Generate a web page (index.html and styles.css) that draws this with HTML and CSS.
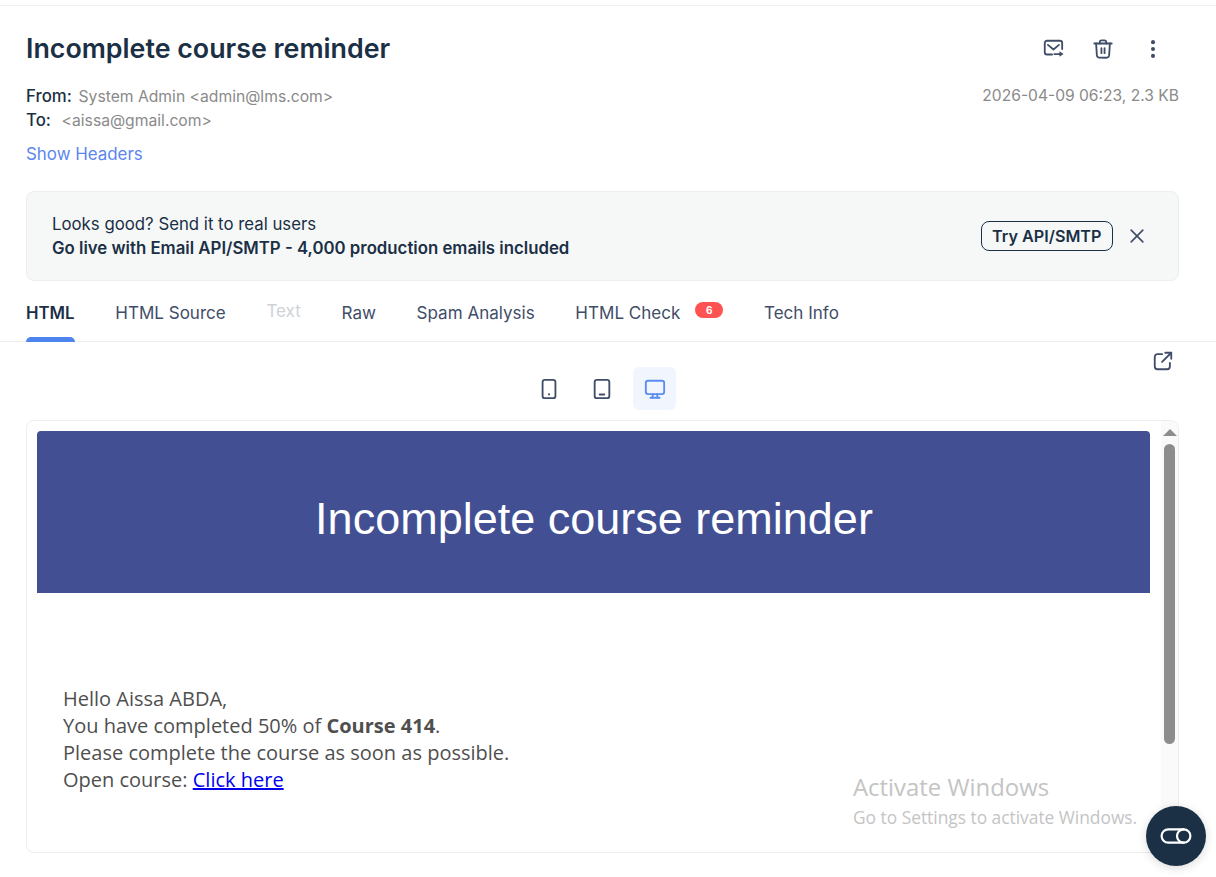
FILE: index.html
```html
<!DOCTYPE html>
<html lang="en">
<head>
    <meta charset="UTF-8">
    <meta name="viewport" content="width=device-width, initial-scale=1.0">
    <title>Incomplete course reminder</title>
    <link rel="stylesheet" href="styles.css">
</head>
<body>
    <div class="page">
        <div class="mail-head">
            <div class="title-row">
                <h1>Incomplete course reminder</h1>
                <div class="actions">
                    <svg class="icon" viewBox="0 0 24 24"><path d="M11 18H5.500A2.500 2.500 0 0 1 3 15.500v-10A2.500 2.500 0 0 1 5.500 3h14A2.500 2.500 0 0 1 22 5.500V12"/><path d="M6.500 7.500l6 5 6-5"/><path d="M13.500 17.500h6"/><path d="M19 14.500l4.500 3-4.500 3z" class="solid"/></svg>
                    <svg class="icon" viewBox="0 0 24 24"><path d="M2.500 6h19"/><path d="M8.500 6V4.500A2 2 0 0 1 10.500 2.500h3a2 2 0 0 1 2 2V6"/><path d="M4.500 6l.8 13a3 3 0 0 0 3 2.500h7.400a3 3 0 0 0 3-2.500l.8-13"/><path d="M10.300 11v5.500"/><path d="M13.700 11v5.500"/></svg>
                    <svg class="icon" viewBox="0 0 24 24"><circle cx="12" cy="4.500" r="2.200" class="solid"/><circle cx="12" cy="12" r="2.200" class="solid"/><circle cx="12" cy="19.500" r="2.200" class="solid"/></svg>
                </div>
            </div>
            <div class="meta-row">
                <div class="people">
                    <div class="person"><b>From:</b> <span class="addr from">System Admin &lt;admin@lms.com&gt;</span></div>
                    <div class="person"><b>To:</b> <span class="addr to">&lt;aissa@gmail.com&gt;</span></div>
                </div>
                <div class="stamp">2026-04-09 06:23, 2.3 KB</div>
            </div>
            <a class="show-headers" href="#">Show Headers</a>
            <div class="promo">
                <div class="promo-text">
                    <div>Looks good? Send it to real users</div>
                    <strong>Go live with Email API/SMTP - 4,000 production emails included</strong>
                </div>
                <a class="try-btn" href="#">Try API/SMTP</a>
                <svg class="close" viewBox="0 0 24 24"><path d="M5 5l14 14"/><path d="M19 5L5 19"/></svg>
            </div>
        </div>

        <div class="tabs">
            <a class="tab active" href="#">HTML</a>
            <a class="tab" href="#">HTML Source</a>
            <a class="tab disabled" href="#">Text</a>
            <a class="tab" href="#">Raw</a>
            <a class="tab" href="#">Spam Analysis</a>
            <a class="tab" href="#">HTML Check<span class="badge">6</span></a>
            <a class="tab" href="#">Tech Info</a>
        </div>

        <div class="view-bar">
            <button class="view-btn"><svg class="icon" viewBox="0 0 24 24"><rect x="5" y="2" width="14" height="20" rx="2.500"/><circle cx="12" cy="17.800" r="1.200" class="solid"/></svg></button>
            <button class="view-btn"><svg class="icon" viewBox="0 0 24 24"><rect x="4" y="2" width="16" height="20" rx="2.500"/><path d="M9.500 18h5"/></svg></button>
            <button class="view-btn selected"><svg class="icon" viewBox="0 0 24 24"><rect x="2" y="3" width="20" height="14.500" rx="2.500"/><path d="M10 17.500l-1 4"/><path d="M14 17.500l1 4"/><path d="M7 21.500h10"/></svg></button>
            <svg class="icon popout" viewBox="0 0 24 24"><path d="M11 4.500H6a3 3 0 0 0-3 3V18a3 3 0 0 0 3 3h10.500a3 3 0 0 0 3-3v-4"/><path d="M11 13L21 3"/><path d="M14.500 3H21v6.500"/></svg>
        </div>

        <div class="frame">
            <div class="mail-body">
                <div class="mail-banner">Incomplete course reminder</div>
                <div class="mail-copy">
                    Hello Aissa ABDA,<br>
                    You have completed 50% of <b>Course 414</b>.<br>
                    Please complete the course as soon as possible.<br>
                    Open course: <a href="#">Click here</a>
                </div>
            </div>
            <div class="scrollbar">
                <div class="arrow"></div>
                <div class="thumb"></div>
            </div>
        </div>
    </div>

    <div class="watermark">
        <div class="wm-title">Activate Windows</div>
        <div class="wm-sub">Go to Settings to activate Windows.</div>
    </div>

    <button class="chat-fab">
        <svg viewBox="0 0 32 18"><path d="M23.700 2.300H8.300a6.700 6.700 0 0 0 0 13.400h15.400"/><circle cx="23.700" cy="9" r="6.700"/></svg>
    </button>
</body>
</html>
```

FILE: styles.css
```css
html, body {
    height: 100%;
}
body {
    margin: 0;
    background: #fff;
    font-family: 'Inter', sans-serif;
    color: #1b2f45;
    overflow: hidden;
}
a {
    text-decoration: none;
}
.page {
    margin-top: 5px;
    border-top: 1px solid #eef0f2;
}
.mail-head {
    padding: 0 37px 0 26px;
}
.title-row {
    display: flex;
    justify-content: space-between;
    align-items: center;
    padding-top: 24px;
    height: 36px;
}
h1 {
    margin: 0;
    font-size: 26.800px;
    line-height: 36px;
    font-weight: 600;
    color: #1b2f45;
}
.icon {
    width: 22px;
    height: 22px;
    fill: none;
    stroke: #3f4d68;
    stroke-width: 2;
    stroke-linecap: round;
    stroke-linejoin: round;
    flex: none;
}
.icon .solid {
    fill: #3f4d68;
    stroke: none;
}
.actions {
    display: flex;
    gap: 28px;
    margin-top: 1px;
    margin-right: 15px;
}
.meta-row {
    display: flex;
    justify-content: space-between;
    margin-top: 18px;
}
.person {
    height: 24px;
    font-size: 16.800px;
    line-height: 24px;
}
.person b {
    font-weight: 500;
}
.addr {
    color: #8a8a8a;
    font-size: 15.700px;
}
.from {
    margin-left: 2px;
}
.to {
    margin-left: 6px;
}
.stamp {
    color: #8a8a8a;
    font-size: 15.600px;
    line-height: 24px;
}
.show-headers {
    display: block;
    margin-top: 10px;
    font-size: 16.900px;
    line-height: 24px;
    color: #5b86f0;
}
.promo {
    display: flex;
    align-items: center;
    margin-top: 25px;
    height: 88px;
    padding: 0 31px 0 25px;
    background: #f6f8f8;
    border: 1px solid #eceeef;
    border-radius: 8px;
}
.promo-text {
    flex: 1;
    font-size: 16.800px;
    line-height: 24px;
}
.promo-text strong {
    font-weight: 600;
}
.try-btn {
    padding: 0 10.500px;
    height: 30px;
    line-height: 28px;
    box-sizing: border-box;
    border: 1px solid #1b2f45;
    border-radius: 8px;
    font-size: 16.200px;
    font-weight: 600;
    color: #1b2f45;
}
.close {
    width: 20px;
    height: 20px;
    margin-left: 14px;
    fill: none;
    stroke: #3f4d68;
    stroke-width: 2;
    stroke-linecap: round;
}
.tabs {
    display: flex;
    gap: 40.700px;
    padding: 0 26px;
    margin-top: 11px;
    height: 49px;
    border-bottom: 1px solid #eceeef;
}
.tab {
    position: relative;
    display: flex;
    font-size: 17.050px;
    line-height: 42px;
    color: #3f4d68;
}
.tab.active {
    color: #1b2f45;
    font-weight: 600;
    font-size: 16.800px;
}
.tab.active::after {
    content: "";
    position: absolute;
    left: 0;
    right: 0;
    bottom: -1px;
    height: 5px;
    background: #4d84f0;
    border-radius: 5px 5px 0 0;
}
.tab.disabled {
    color: #cfd2d6;
    line-height: 38px;
}
.badge {
    width: 28px;
    height: 16px;
    margin: 10px 0 0 15px;
    line-height: 16px;
    text-align: center;
    background: #ff5252;
    color: #fff;
    border-radius: 8px;
    font-size: 10px;
    font-weight: 700;
}
.view-bar {
    position: relative;
    display: flex;
    justify-content: center;
    gap: 10px;
    padding: 25px 13px 10px 0;
}
.view-btn {
    width: 43px;
    height: 43px;
    padding: 0;
    display: flex;
    align-items: center;
    justify-content: center;
    background: none;
    border: 0;
    border-radius: 6px;
}
.view-btn.selected {
    background: #f1f5fe;
}
.view-btn.selected .icon {
    stroke: #5b8cf0;
}
.popout {
    position: absolute;
    top: 8px;
    right: 42px;
}
.frame {
    display: flex;
    margin: 0 37px 0 26px;
    height: 431px;
    border: 1px solid #eceeef;
    border-radius: 8px;
    overflow: hidden;
}
.mail-body {
    flex: 1;
    padding: 10px 11px 0 10px;
}
.mail-banner {
    height: 162px;
    line-height: 176px;
    padding-left: 1px;
    text-align: center;
    background: #425093;
    color: #fff;
    font-family: 'Liberation Sans', Arial, sans-serif;
    font-size: 45px;
    border-radius: 4px 4px 0 0;
}
.mail-copy {
    margin-top: 92px;
    padding-left: 26px;
    font-family: 'Open Sans', sans-serif;
    font-size: 20px;
    line-height: 27px;
    color: #4f4f4f;
}
.mail-copy a {
    color: #0000ee;
    text-decoration: underline;
}
.scrollbar {
    width: 17px;
    flex: none;
    background: #fafafa;
    display: flex;
    flex-direction: column;
    align-items: center;
}
.arrow {
    width: 0;
    height: 0;
    margin-top: 8px;
    border-left: 7px solid transparent;
    border-right: 7px solid transparent;
    border-bottom: 7px solid #8d8d8d;
}
.thumb {
    width: 11px;
    height: 300px;
    margin-top: 8px;
    background: #8d8d8d;
    border-radius: 6px;
}
.watermark {
    position: absolute;
    left: 853px;
    top: 771px;
    font-family: 'Open Sans', sans-serif;
    color: #c4c4c4;
}
.wm-title {
    font-size: 23.900px;
    line-height: 32px;
}
.wm-sub {
    margin-top: 2px;
    font-size: 17.350px;
    line-height: 24px;
}
.chat-fab {
    position: absolute;
    left: 1146px;
    top: 806px;
    width: 60px;
    height: 60px;
    padding: 0;
    display: flex;
    align-items: center;
    justify-content: center;
    background: #1b2f45;
    border: 0;
    border-radius: 50%;
    box-shadow: 0 2px 10px rgba(0, 0, 0, 0.15);
}
.chat-fab svg {
    width: 32px;
    height: 18px;
    fill: none;
    stroke: #fff;
    stroke-width: 2.200;
    stroke-linecap: round;
}
```
